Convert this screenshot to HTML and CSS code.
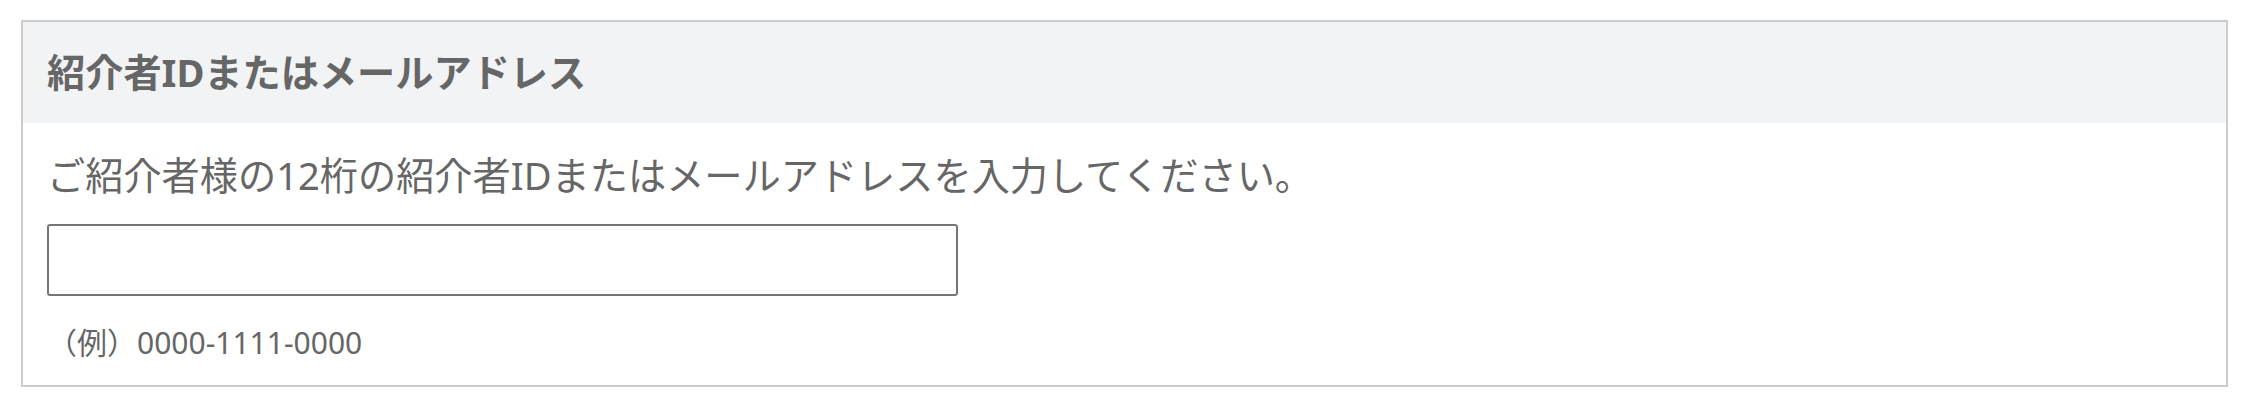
FILE: index.html
```html
<!DOCTYPE html>
<html lang="ja">
<head>
    <meta charset="utf-8">
    <title>紹介者ID</title>
    <link rel="stylesheet" href="styles.css">
</head>
<body>

    <!-- Referrer box -->
    <div class="panel">
        <div class="panel-head">紹介者IDまたはメールアドレス</div>
        <div class="panel-body">
            <p class="lead">ご紹介者様の12桁の紹介者IDまたはメールアドレスを入力してください。</p>
            <input type="text" class="ref-input" name="referrer">
            <p class="note">（例）0000-1111-0000</p>
        </div>
    </div>

</body>
</html>
```

FILE: styles.css
```css
/* General Body Styles */
body {
    margin: 0;
    padding: 20px 19px 0 21px;
    font-family: "Noto Sans", "Noto Sans CJK JP", sans-serif;
    color: #666;
    background: #fff;
}

/* Panel */
.panel {
    border: 2px solid #ccc;
}

.panel-head {
    background-color: #f2f3f5;
    padding: 22px 24px;
    font-size: 38.2px;
    line-height: 57px;
    font-weight: bold;
    color: #666;
}

.panel-body {
    padding: 24px 24px 20px;
}

.lead {
    margin: 0;
    font-size: 38.2px;
    line-height: 57px;
}

.ref-input {
    display: block;
    box-sizing: border-box;
    width: 911px;
    height: 72px;
    margin: 20px 0 0;
    padding: 0 12px;
    border: 2px solid #767676;
    border-radius: 3px;
    font-family: inherit;
    font-size: 30px;
    background: #fff;
}

.note {
    margin: 24px 0 0;
    font-size: 30px;
    line-height: 45px;
}
```
